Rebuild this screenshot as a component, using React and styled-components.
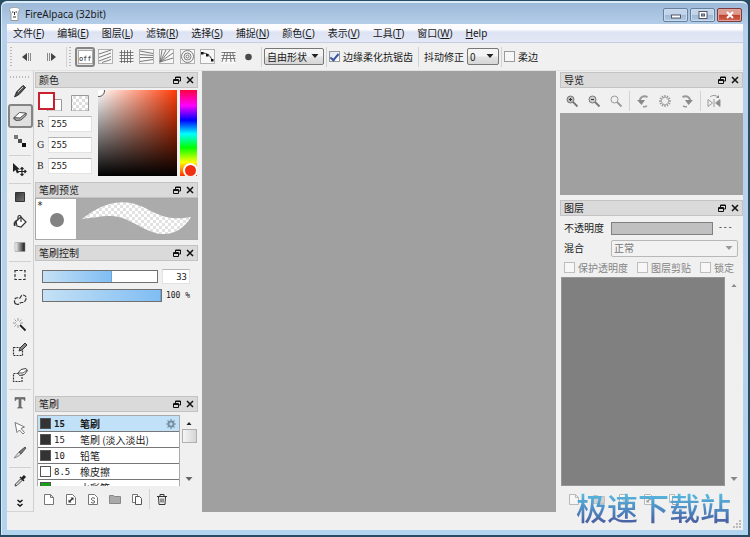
import React, { useState } from "react";
import styled, { createGlobalStyle, css } from "styled-components";

const ui = '"Noto Sans", "Noto Sans CJK SC", sans-serif';
const cjk = '"Noto Sans CJK SC", sans-serif';
const mono = '"DejaVu Sans Mono", "Noto Sans CJK SC", monospace';

const GlobalStyle = createGlobalStyle`
  * { box-sizing: border-box; }
  body { margin: 0; background: #284c62; color: #1a1a1a; font: 10px/14px ${cjk}; }
  button, input, select { font: inherit; color: inherit; margin: 0; }
  button { padding: 0; border: 0; background: none; }
  svg { display: block; flex: none; }
`;

/* ---------- window frame ---------- */

const Desktop = styled.div`
  min-height: 100vh;
  display: flex;
  padding: 1px 2px 2px 1px;
`;

const Window = styled.div`
  position: relative;
  flex: 1;
  display: flex;
  flex-direction: column;
  padding: 0 5px 5px 5px;
  border: 1px solid #dcebf8;
  border-width: 2px 0 0 1px;
  border-radius: 6px 6px 0 0;
  background: linear-gradient(#9db9d8, #b7d0eb 24px, #b9d1ea 300px, #b2d4ee);
`;

const TitleBar = styled.header`
  height: 21px;
  display: flex;
  align-items: center;
  gap: 5px;
  padding-left: 2px;
`;

const Title = styled.h1`
  flex: 1;
  margin: 0;
  font: 10px/14px ${ui};
`;

const WindowButtons = styled.div`
  display: flex;
  align-items: center;
  gap: 2px;
  padding: 3px 1px 0 0;
`;

const WindowButton = styled.button`
  width: 25px;
  height: 14px;
  display: flex;
  align-items: center;
  justify-content: center;
  border: 1px solid ${(p) => (p.$danger ? "#7c3a3c" : "#66809e")};
  border-radius: 2px;
  box-shadow: inset 0 0 0 1px ${(p) => (p.$danger ? "#e0a59c" : "#cbdcee")};
  background: ${(p) =>
    p.$danger
      ? "linear-gradient(#dd9a8f 45%, #c0402f 50%, #cf6650)"
      : "linear-gradient(#c3d5ea 45%, #9db8d6 50%, #b2cae4)"};
`;

const MenuBar = styled.nav`
  height: 19px;
  display: flex;
  align-items: center;
  gap: 13px;
  padding-left: 6px;
  border-bottom: 1px solid #c6cce0;
  background: linear-gradient(#fdfdff 30%, #dde3f3 45%, #e4e8f7);
`;

const MenuLink = styled.a`
  color: inherit;
  font: 10px/14px ${ui};
  text-decoration: none;
  white-space: nowrap;
`;

/* ---------- toolbar ---------- */

const ToolBar = styled.div`
  height: 28px;
  display: flex;
  align-items: center;
  padding-left: 3px;
  border-bottom: 1px solid #e2e2e2;
  background: #f0f0f0;
`;

const Grip = styled.i`
  flex: none;
  width: ${(p) => (p.$wide ? "20px" : "2px")};
  height: ${(p) => (p.$wide ? "2px" : "20px")};
  background: repeating-linear-gradient(
    ${(p) => (p.$wide ? "90deg" : "180deg")}, #b9b9b9 0 1px, transparent 1px 3px
  );
`;

const Rule = styled.i`
  flex: none;
  width: 1px;
  height: 20px;
  margin: 0 ${(p) => p.$gap || 2}px;
  background: #d2d2d2;
`;

const NavButtons = styled.div`
  display: flex;
  gap: 14px;
  padding: 0 7px 0 9px;
`;

const SnapGroup = styled.div`
  display: grid;
  grid-template-columns: repeat(9, 1fr);
  flex: none;
  width: 184px;
  margin-left: 4px;
`;

const SnapButton = styled.button`
  height: 20px;
  display: flex;
  align-items: center;
  justify-content: center;
  border-radius: 3px;
  ${(p) => p.$active && css`border: 2px solid #858585; background: #e6e6e6;`}
`;

const OffFace = styled.span`
  width: 15px;
  height: 14px;
  padding-top: 4px;
  background: #fff;
  border: 1px solid #aaa;
  font: 7px/9px ${mono};
  display: flex;
  justify-content: center;
`;

const SelectBox = styled.span`
  position: relative;
  flex: none;
  width: ${(p) => (p.$grow ? "auto" : p.$short ? "32px" : "60px")};
  ${(p) => p.$grow && css`flex: 1;`}
  color: ${(p) => (p.$muted ? "#777" : "#1a1a1a")};

  svg {
    position: absolute;
    right: 5px;
    top: 6px;
    pointer-events: none;
  }
`;

const Select = styled.select`
  appearance: none;
  display: block;
  width: 100%;
  height: 17px;
  padding: 0 2px;
  border: 1px solid ${(p) => (p.disabled ? "#b8b8b8" : "#777")};
  border-radius: 2px;
  background: ${(p) => (p.disabled ? "#f2f2f2" : "linear-gradient(#f4f4f4 48%, #e2e2e2 52%, #d6d6d6)")};
  font: 10px/14px ${cjk};
  opacity: 1;
`;

const CheckLabel = styled.label`
  display: flex;
  align-items: center;
  gap: 3px;
  color: ${(p) => (p.$muted ? "#858585" : "#1a1a1a")};
  white-space: nowrap;
`;

const CheckBox = styled.input`
  appearance: none;
  flex: none;
  width: 11px;
  height: 11px;
  border: 1px solid #9a9a9a;
  background: #f7f7f7;

  &:disabled { border-color: #bdbdbd; }
  &:checked {
    background: #eef3fb linear-gradient(135deg, #dbe4f4, #fff);
  }
  &:checked::after {
    content: "";
    display: block;
    width: 3px;
    height: 7px;
    margin: 0 auto;
    border: solid #3b55a0;
    border-width: 0 2px 2px 0;
    transform: rotate(40deg);
  }
`;

const FieldLabel = styled.label`
  margin-right: 3px;
  white-space: nowrap;
`;

/* ---------- body ---------- */

const Body = styled.main`
  flex: 1;
  display: grid;
  grid-template-columns: 27px 164px 1fr 184px;
  background: #f0f0f0;
`;

const ToolColumn = styled.aside`
  display: flex;
  flex-direction: column;
  align-items: center;
  gap: 1px;
  padding-top: 4px;
  border-right: 1px solid #cfcfcf;
  border-bottom: 1px solid #d4d4d4;
`;

const Tool = styled.button`
  width: 25px;
  height: ${(p) => (p.$compact ? "16px" : "24px")};
  display: flex;
  align-items: ${(p) => (p.$compact ? "flex-end" : "center")};
  justify-content: center;
  border: 1px solid transparent;
  border-radius: 3px;
  ${(p) => p.$active && css`border: 2px solid #848484; background: #e0e0e0;`}
`;

const ToolRule = styled.i`
  width: 22px;
  height: 1px;
  margin-top: 1px;
  background: #d0d0d0;
`;

const DockColumn = styled.aside`
  display: flex;
  flex-direction: column;
  padding: 1px 0 0 1px;
`;

const Dock = styled.section`
  display: flex;
  flex-direction: column;
  ${(p) => p.$fill && css`flex: 1;`}
`;

const DockHeader = styled.header`
  height: 16px;
  display: flex;
  align-items: center;
  gap: 5px;
  padding: 0 3px;
  border: 1px solid #c3c3c3;
  background: #dadada;
`;

const DockTitle = styled.h2`
  flex: 1;
  margin: 0;
  font: 10px/14px ${cjk};
`;

const Canvas = styled.div`
  margin: 0 3px 0 4px;
  background: #a0a0a0;
`;

const StatusBar = styled.footer`
  height: 18px;
  display: flex;
  align-items: flex-end;
  justify-content: flex-end;
  padding: 0 2px 2px 0;
  background: #f0f0f0;
`;

/* ---------- colour dock ---------- */

const ColorBody = styled.div`
  display: flex;
  gap: 3px;
  padding: 2px 1px 6px 2px;
`;

const ColorFields = styled.div`
  flex: 1;
  display: flex;
  flex-direction: column;
  gap: 5px;
`;

const Swatches = styled.div`
  height: 21px;
`;

const Channel = styled.label`
  display: flex;
  align-items: center;
  gap: 4px;
  font: 9px/14px "DejaVu Serif", serif;
`;

const ChannelKey = styled.span`
  width: 7px;
`;

const NumberField = styled.input`
  width: ${(p) => (p.$short ? "28px" : "44px")};
  height: ${(p) => (p.$short ? "15px" : "16px")};
  padding: 0 2px;
  border: 1px solid #e2e2e2;
  border-top-color: #b5b5b5;
  background: #fff;
  font: 9px/14px ${mono};
  text-align: ${(p) => (p.$short ? "right" : "left")};
`;

const ShadeField = styled.div`
  position: relative;
  width: 79px;
  height: 86px;
  overflow: hidden;
  background: linear-gradient(transparent, #000), linear-gradient(90deg, #fff, #ff3a05);

  &::before {
    content: "";
    position: absolute;
    left: -5px;
    top: -5px;
    width: 10px;
    height: 10px;
    border: 1px solid #555;
    border-radius: 50%;
    background: #fff;
  }
`;

const HueBar = styled.div`
  position: relative;
  width: 17px;
  height: 86px;
  overflow: hidden;
  background: linear-gradient(#ff0040, #ff00ff 18%, #0000ff 35%, #00ffff 51%, #00ff00 67%, #ffff00 84%, #ff3000);

  &::before {
    content: "";
    position: absolute;
    left: 3px;
    bottom: -2px;
    width: 11px;
    height: 11px;
    border: 2px solid #fff;
    border-radius: 50%;
    background: #f03010;
  }
`;

/* ---------- brush docks ---------- */

const Preview = styled.div`
  display: flex;
  height: 42px;
  margin-bottom: 5px;
  border: 1px solid #a8a8a8;
  background: #ababab;
`;

const TipCell = styled.div`
  width: 40px;
  padding-left: 1px;
  background: #fff;
  font: 10px/14px ${mono};
`;

const Tip = styled.i`
  display: block;
  width: 14px;
  height: 14px;
  margin: 0 auto;
  border-radius: 50%;
  background: #828282;
`;

const StrokeCell = styled.div`
  flex: 1;
  display: flex;
  justify-content: center;
  padding-top: 3px;
`;

const Controls = styled.div`
  flex: 1;
  display: flex;
  flex-direction: column;
  gap: 4px;
  padding: 8px 8px 0 7px;
`;

const ControlRow = styled.div`
  display: flex;
  align-items: center;
  justify-content: space-between;
  height: 15px;
  font: 8px/14px ${mono};
`;

const Slider = styled.input`
  appearance: none;
  width: ${(p) => (p.$long ? "120px" : "116px")};
  height: 13px;
  border: 1px solid #707070;
  background: linear-gradient(90deg, #c5e1f5, #7fbdf3) no-repeat #fff;
  background-size: ${(p) => p.$fill}% 100%;

  &::-webkit-slider-thumb { appearance: none; width: 1px; height: 11px; background: #6ba6d8; }
`;

const ListArea = styled.div`
  display: flex;
  gap: 1px;
  padding: 3px 1px 0 2px;
`;

const BrushList = styled.ul`
  width: 143px;
  height: 71px;
  margin: 0;
  padding: 0;
  overflow: hidden;
  list-style: none;
  border: 1px solid #aaa;
  border-bottom: 0;
  background: #fff;
`;

const BrushRow = styled.li`
  height: 16px;
  display: flex;
  align-items: center;
  padding: 0 3px 0 2px;
  border-bottom: 1px solid #777;
  font-weight: ${(p) => (p.$active ? 700 : 400)};
  background: ${(p) => (p.$active ? "#c0e1f8" : "#fff")};
`;

const BrushChip = styled.i`
  width: 11px;
  height: 11px;
  margin-right: 3px;
  border: 1px solid #555;
  background: ${(p) => p.$color};
`;

const BrushSize = styled.span`
  width: 26px;
  font-family: ${mono};
  font-size: 9px;
`;

const BrushName = styled.span`
  flex: 1;
  white-space: nowrap;
`;

const ScrollTrack = styled.div`
  width: ${(p) => (p.$wide ? "18px" : "16px")};
  display: flex;
  flex-direction: column;
  align-items: center;
  padding: 6px 0 5px;
  background: #f0f0f0;
`;

const ScrollThumb = styled.i`
  width: 15px;
  height: 14px;
  margin-top: 4px;
  border: 1px solid #b0b0b0;
  background: linear-gradient(90deg, #f5f5f5, #d5d5d5);
`;

const ScrollGap = styled.i`
  flex: 1;
`;

const IconRow = styled.div`
  height: 26px;
  display: flex;
  align-items: center;
  gap: ${(p) => p.$gap || 10}px;
  padding-left: 8px;
`;

const IconButton = styled.button`
  display: flex;
  opacity: ${(p) => (p.$faint ? 0.45 : 1)};
`;

/* ---------- right docks ---------- */

const Navigator = styled.div`
  height: 82px;
  margin-bottom: 5px;
  background: #a0a0a0;
`;

const NavTools = styled.div`
  height: 25px;
  display: flex;
  align-items: center;
  gap: 8px;
  padding-left: 5px;
`;

const LayerForm = styled.div`
  padding: 2px 5px 0 4px;
`;

const LayerRow = styled.div`
  display: flex;
  align-items: center;
  height: 20px;
  gap: 3px;
`;

const LayerLabel = styled.label`
  width: 44px;
`;

const OpacitySlider = styled.input`
  appearance: none;
  flex: 1;
  min-width: 0;
  height: 13px;
  border: 1px solid #808080;
  background: #c0c0c0;

  &::-webkit-slider-thumb { appearance: none; width: 1px; }
`;

const OpacityValue = styled.span`
  width: 22px;
  padding-left: 2px;
  font: 8px/14px ${mono};
`;

const CheckRow = styled.div`
  display: flex;
  align-items: center;
  gap: 9px;
  height: 19px;
`;

const LayerArea = styled.div`
  flex: 1;
  display: flex;
  padding-left: 1px;
`;

const LayerList = styled.div`
  flex: 1;
  border: 1px solid #969696;
  background: #808080;
`;

const Watermark = styled.div`
  position: absolute;
  right: 17px;
  bottom: 10px;
  font: 500 31px/36px ${cjk};
  color: transparent;
  background: linear-gradient(#56b8de 15%, #4e86c0 60%, #4a62a4 90%);
  background-clip: text;
  -webkit-background-clip: text;
`;

/* ---------- icons ---------- */

const Icon = ({ size = 16, w, h, children, ...rest }) => (
  <svg width={w || size} height={h || size} viewBox={`0 0 ${w || size} ${h || size}`} fill="none" stroke="#444" strokeWidth="1" aria-hidden="true" {...rest}>
    {children}
  </svg>
);

const Arrow = ({ up, color = "#222" }) => (
  <Icon w={8} h={4} stroke="none"><path fill={color} d={up ? "M1.5 4 4 1l2.5 3z" : "M.5 0h7L4 4z"} /></Icon>
);

const Float = () => (
  <Icon size={8} stroke="#111"><path d="M2.500 3V1h5v4H5.500M2.500 1.500h5" /><path d="M.5 3.500h5v4h-5zM.5 4.500h5" /></Icon>
);
const Close = () => (
  <Icon size={8} stroke="#111" strokeWidth="1.500"><path d="m1 1 6 6M7 1 1 7" /></Icon>
);

const snapArt = {
  parallel: <path d="M1 5 13 1M1 8.500 13 4M1 12 13 7.500M4 13.500l9-3" />,
  grid: <path d="M2.500 1v13M5.500 1v13M8.500 1v13M11.500 1v13M.5 3.500h14M.5 6.500h14M.5 9.500h14M.5 12.500h14" />,
  perspective: <path d="M1 2l13 2.500M1 5.500l13 1M1 8.500h13M1 12.500l13-2" />,
  radial: <path d="M1 13 3 1M1 13 7 1M1 13 11 1M1 13 14 4M1 13l13-4" />,
  circle: <><circle cx="7.500" cy="7.500" r="1.500" /><circle cx="7.500" cy="7.500" r="3.500" /><circle cx="7.500" cy="7.500" r="6" /></>,
  curve: <><path stroke="#222" d="M2 4c5 0 8 2 10 7" /><path fill="#111" stroke="none" d="M1 3h2.500v2.500H1zM6 5h2.500v2.500H6zM11 10h2.500v2.500H11z" /></>,
  floor: <path d="M.5 3.500h14M.5 6.500h14M.5 9.500h14M4 3 1 13M6.500 3 5 13M9 3l1 10M11.500 3 14 13" />,
};

const Snap = ({ kind }) =>
  kind === "dot" ? (
    <Icon size={15} stroke="none"><circle cx="7.500" cy="8" r="3.300" fill="#4a4a4a" /></Icon>
  ) : (
    <Icon size={15} stroke="#6c6c6c" strokeWidth=".9">
      <rect x=".5" y=".5" width="14" height="14" fill="#f7f7f7" stroke={kind === "grid" || kind === "floor" ? "none" : "#aaa"} />
      {snapArt[kind]}
    </Icon>
  );

const toolArt = {
  pencil: <><path fill="#555" stroke="#222" d="M3 13.500 4.500 9 11 2.500l2.500 2L7 11.500z" /><path stroke="#ccc" d="m6 9 5-5" /><path fill="#111" d="m2.500 14 2-1-1-1z" /></>,
  eraser: <><path fill="#fff" stroke="#555" d="M2 9.500 7.500 4.500l6 .5c1 0 1 1 .5 1.500L9 11.500 4 12c-2 0-3-1.500-2-2.500z" /><path fill="#aaa" stroke="#555" d="m2 9.500 6 .5 6-5v2.500L9 12l-5 .5z" /></>,
  dots: <g stroke="none"><path fill="#777" d="M2 2h4v4H2z" /><path fill="#4c4c4c" d="M6 6h4v4H6z" /><path fill="#111" d="M10 10h4v4h-4z" /></g>,
  move: <><path fill="#222" stroke="none" d="M1 2v9l2.500-2L5 12.500 7 11.500 5.500 8.500H8z" /><path stroke="#222" strokeWidth="1.200" d="M10 6.500v8M6 10.500h8M8.500 8 10 6.500 11.500 8M8.500 13l1.500 1.500 1.500-1.500M12.500 9l1.500 1.500-1.500 1.500" /></>,
  fill: <path fill="url(#dark)" stroke="#333" d="M3.500 3.500h9v9h-9z" />,
  bucket: <><path fill="#fff" stroke="#333" strokeWidth="1.200" d="m4 7 5-4 5 5-5 5-4-1z" /><path stroke="#333" strokeWidth="1.200" d="M9 8V3c0-2-3-2-3 0v2" /><path fill="#333" stroke="none" d="M2 12c-1-3 0-6 5-6-3 1-3.500 3-3.500 6z" /></>,
  gradient: <path fill="url(#side)" stroke="#999" strokeWidth=".6" d="M3 3.500h10v9H3z" />,
  select: <path stroke="#333" strokeWidth="1.200" strokeDasharray="3 1.500" d="M3 3.500h10v9H3z" />,
  lasso: <path stroke="#333" strokeWidth="1.200" strokeDasharray="4 1" d="M4 12c-2-1-2-5 0-6s3 1 4 0 1-3 3-3c4 0 4 5 1 7-2 1-3 0-4 1s-2 2-4 1z" />,
  wand: <><path stroke="#999" d="M6 1v3M6 8v3M1 6h3M8 6h3M2.500 2.500l2 2M9.500 2.500l-2 2M2.500 9.500l2-2" /><path stroke="#222" strokeWidth="1.800" d="m8 8 5.500 5.500" /></>,
  selectPen: <><path stroke="#333" strokeDasharray="2 1" strokeWidth="1.200" d="M1.500 5.500h9v8h-9z" /><path fill="#888" stroke="#333" d="m7 9 1-3 5-5 2 2-5 5z" /></>,
  selectEraser: <><path stroke="#333" strokeDasharray="2 1" strokeWidth="1.200" d="M1.500 6.500h8.500v8H1.500z" /><path fill="#fff" stroke="#444" d="M6 6 9 2.500l5-1 1.500 2-3 4-5 1z" /><path stroke="#555" d="m6 6 5 0 4-3" /></>,
  text: <path fill="#777" stroke="#555" strokeWidth=".6" d="M3 2.500h10v3h-.5L11.500 4H9v8l1.500 1h-5L7 12V4H4.500L3.500 5.500H3z" />,
  pointer: <path fill="#fff" stroke="#777" d="m3 2.500 2 10L7.500 10l3.500 4 1.500-1.500L9 8.500l3.500-1.500z" />,
  knife: <><path fill="#ddd" stroke="#888" d="m2 13 5-6 2 2c-2 2-4 3-7 4z" /><path fill="#777" stroke="#555" d="m7 7 6-5 1 1-5 6z" /></>,
  dropper: <><path fill="#ddd" stroke="#444" d="m3 13 .5-2 5-5L10 7.500l-5 5z" /><path stroke="#222" strokeWidth="3" d="m10 6 3-3" /><path stroke="#222" strokeWidth="1.500" d="m8 4 4 4" /></>,
  more: <path stroke="#111" strokeWidth="1.500" d="m5.500 7 2.500 2 2.500-2M5.500 11 8 13l2.500-2" />,
};

const fileArt = {
  page: <path fill="#fff" stroke="#777" d="M1.500 1.500h6l3 3v7h-9zM7.500 1.500v3h3" />,
  copyPage: <><path fill="#fff" stroke="#777" d="M1.500 1.500h6l3 3v7h-9z" /><path fill="#333" stroke="none" d="M5.500 4.500h3v3l-1-1-2 2 1 1h-3v-3l1 1 2-2z" /></>,
  script: <><path fill="#fff" stroke="#777" d="M1.500 1.500h6l3 3v7h-9z" /><path stroke="#555" d="M8 5.500C6 4 4 5 4.500 6.500S8 7 7.500 9 5 10 4 9" /></>,
  folder: <path fill="#aaa" stroke="#888" d="M.5 2.500h4l1 1h6v7H.5z" />,
  duplicate: <><path fill="#fff" stroke="#777" d="M1.500 1.500h5v8h-5z" /><path fill="#fff" stroke="#555" d="M4.500 3.500h4l2 2v6h-6z" /></>,
  trash: <path stroke="#333" d="M1 3.500h10M4 3V1.500h4V3M2.500 4l.5 7.500h6l.5-7.500M5 5.500v4M7 5.500v4" />,
};

const FileIcon = ({ kind }) => <Icon size={12}>{fileArt[kind]}</Icon>;

const navArt = {
  zoomIn: <><circle cx="5.500" cy="5.500" r="3.500" fill="#bbb" /><path d="M4 5.500h3M5.500 4v3" stroke="#333" /><path d="m8 8 4.500 4.500" strokeWidth="1.800" /></>,
  zoomOut: <><circle cx="5.500" cy="5.500" r="3.500" fill="#ccc" /><path d="M4 5.500h3" stroke="#333" /><path d="m8 8 4.500 4.500" strokeWidth="1.800" /></>,
  zoomFit: <><circle cx="5.500" cy="5.500" r="3.500" /><path d="m8 8 4.500 4.500" strokeWidth="1.800" /></>,
  rotateLeft: <><path strokeWidth="2" d="M11.500 3C7 1 3.500 3.500 4 7.500" /><path fill="#888" stroke="none" d="M1 6h8L5.500 11z" /><path strokeWidth="1.500" d="M7 12.500c2 .5 3 0 4-.5" /></>,
  spinner: <path strokeWidth="1.400" d="M7 1v3M7 10v3M1 7h3M10 7h3M4 1.800l1.500 2.600M10 1.800 8.500 4.400M1.800 4l2.600 1.500M12.200 4 9.600 5.500M1.800 10l2.600-1.500M12.200 10 9.600 8.500M4 12.200l1.500-2.600M10 12.200 8.500 9.600" />,
  rotateRight: <><path strokeWidth="2" d="M2.500 3C7 1 10.500 3.500 10 7.500" /><path fill="#888" stroke="none" d="M13 6H5l3.500 5z" /><path strokeWidth="1.500" d="M7 12.500c-2 .5-3 0-4-.5" /></>,
  flip: <><path d="M3 3c2-2 6-2 8 0M7 5v8" /><path d="M1 5.500 5.500 9 1 12.500z" /><path fill="#888" d="M13 5.500 8.500 9l4.500 3.500z" /><path fill="#888" d="M12 1v3H9z" stroke="none" /></>,
};

const NavIcon = ({ kind }) => (
  <Icon size={14} stroke={kind === "zoomIn" || kind === "zoomOut" ? "#777" : "#999"}>{navArt[kind]}</Icon>
);

const Logo = () => (
  <Icon w={11} h={14} stroke="#999">
    <path fill="#fff" d="M.5 3C0 1 3 .5 5.500.5S11 1 10.500 3L9 6v7.500H2V6z" />
    <path stroke="#333" d="M3 5h1.500M6.500 5H8M5.500 5v3M4 10h3" />
  </Icon>
);

const BrushStroke = () => (
  <Icon w={112} h={36} stroke="none">
    <defs>
      <pattern id="checker" width="6" height="6" patternUnits="userSpaceOnUse">
        <path fill="#fff" d="M0 0h6v6H0z" /><path fill="#e2e2e2" d="M0 0h3v3H0zM3 3h3v3H3z" />
      </pattern>
    </defs>
    <path fill="url(#checker)" d="M1 17C17 4 34-2 50 1c20 4 29 20 60 14-7 12-18 18-30 17C62 30 48 14 30 14c-12 0-18 2-29 3z" />
  </Icon>
);

const SwatchArt = () => (
  <Icon w={56} h={21} stroke="none">
    <defs>
      <pattern id="tiles" width="6" height="6" patternUnits="userSpaceOnUse">
        <path fill="#fff" d="M0 0h6v6H0z" /><path fill="#ddd" d="M0 0h3v3H0zM3 3h3v3H3z" />
      </pattern>
    </defs>
    <path fill="#fff" stroke="#999" d="M10.500 9.500h14V21h-14z" />
    <path fill="#fff" stroke="#c8202f" strokeWidth="2" d="M2 3h15v16H2z" />
    <path fill="url(#tiles)" stroke="#999" d="M34.500 5.500h17V21h-17z" />
  </Icon>
);

const Gear = () => (
  <Icon size={10} stroke="#7890a4">
    <circle cx="5" cy="5" r="2.500" strokeWidth="2" />
    <path d="M5 0v10M0 5h10M1.500 1.500l7 7M8.500 1.500l-7 7" strokeWidth="1.200" strokeDasharray="2 6 2" />
  </Icon>
);

/* ---------- data ---------- */

const menus = [["文件", "F"], ["编辑", "E"], ["图层", "L"], ["滤镜", "R"], ["选择", "S"], ["捕捉", "N"], ["颜色", "C"], ["表示", "V"], ["工具", "T"], ["窗口", "W"]];
const snaps = ["parallel", "grid", "perspective", "radial", "circle", "curve", "floor", "dot"];
const tools = ["pencil", "eraser", "dots", null, "move", null, "fill", "bucket", "gradient", null, "select", "lasso", "wand", "selectPen", "selectEraser", null, "text", "pointer", "knife", null, "dropper", "more"];
const brushes = [
  { size: "15", name: "笔刷", color: "#333" },
  { size: "15", name: "笔刷 (淡入淡出)", color: "#333" },
  { size: "10", name: "铅笔", color: "#333" },
  { size: "8.5", name: "橡皮擦", color: "#fff" },
  { size: "", name: "水彩笔", color: "#18a018" },
];

const DockPanel = ({ title, fill, children }) => (
  <Dock $fill={fill}>
    <DockHeader>
      <DockTitle>{title}</DockTitle>
      <IconButton aria-label={`${title} 浮动`}><Float /></IconButton>
      <IconButton aria-label={`${title} 关闭`}><Close /></IconButton>
    </DockHeader>
    {children}
  </Dock>
);

function ColorDock() {
  const [rgb, setRgb] = useState({ R: "255", G: "255", B: "255" });
  return (
    <DockPanel title="颜色">
      <ColorBody>
        <ColorFields>
          <Swatches><SwatchArt /></Swatches>
          {Object.keys(rgb).map((key) => (
            <Channel key={key}>
              <ChannelKey>{key}</ChannelKey>
              <NumberField value={rgb[key]} onChange={(e) => setRgb({ ...rgb, [key]: e.target.value })} />
            </Channel>
          ))}
        </ColorFields>
        <ShadeField />
        <HueBar />
      </ColorBody>
    </DockPanel>
  );
}

function BrushDocks() {
  const [active, setActive] = useState(0);
  return (
    <>
      <DockPanel title="笔刷预览">
        <Preview>
          <TipCell>*<Tip /></TipCell>
          <StrokeCell><BrushStroke /></StrokeCell>
        </Preview>
      </DockPanel>
      <DockPanel title="笔刷控制" fill>
        <Controls>
          <ControlRow>
            <Slider type="range" aria-label="笔刷大小" defaultValue="60" $fill={60} />
            <NumberField $short aria-label="大小" defaultValue="33" />
          </ControlRow>
          <ControlRow>
            <Slider type="range" aria-label="不透明度" defaultValue="100" $fill={100} $long />
            <span>100 %</span>
          </ControlRow>
        </Controls>
      </DockPanel>
      <DockPanel title="笔刷">
        <ListArea>
          <BrushList>
            {brushes.map((b, i) => (
              <BrushRow key={b.name} $active={i === active} onClick={() => setActive(i)}>
                <BrushChip $color={b.color} />
                <BrushSize>{b.size}</BrushSize>
                <BrushName>{b.name}</BrushName>
                {i === active && <IconButton aria-label="设置"><Gear /></IconButton>}
              </BrushRow>
            ))}
          </BrushList>
          <ScrollTrack><Arrow up /><ScrollThumb /><ScrollGap /><Arrow color="#666" /></ScrollTrack>
        </ListArea>
        <IconRow>
          {["page", "copyPage", "script", "folder", "duplicate"].map((k) => (
            <IconButton key={k} aria-label={k}><FileIcon kind={k} /></IconButton>
          ))}
          <Rule $gap={-4} />
          <IconButton aria-label="trash"><FileIcon kind="trash" /></IconButton>
        </IconRow>
      </DockPanel>
    </>
  );
}

function RightDocks() {
  return (
    <DockColumn>
      <DockPanel title="导览">
        <NavTools>
          {["zoomIn", "zoomOut", "zoomFit"].map((k) => <IconButton key={k} aria-label={k}><NavIcon kind={k} /></IconButton>)}
          <Rule $gap={-2} />
          {["rotateLeft", "spinner", "rotateRight"].map((k) => <IconButton key={k} aria-label={k}><NavIcon kind={k} /></IconButton>)}
          <Rule $gap={-2} />
          <IconButton aria-label="flip"><NavIcon kind="flip" /></IconButton>
        </NavTools>
        <Navigator />
      </DockPanel>
      <DockPanel title="图层" fill>
        <LayerForm>
          <LayerRow>
            <LayerLabel htmlFor="opacity">不透明度</LayerLabel>
            <OpacitySlider id="opacity" type="range" disabled />
            <OpacityValue>---</OpacityValue>
          </LayerRow>
          <LayerRow>
            <LayerLabel htmlFor="blend">混合</LayerLabel>
            <SelectBox $grow $muted>
              <Select id="blend" disabled><option>正常</option></Select>
              <Arrow color="#999" />
            </SelectBox>
          </LayerRow>
          <CheckRow>
            {["保护透明度", "图层剪贴", "锁定"].map((t) => (
              <CheckLabel key={t} $muted><CheckBox type="checkbox" disabled />{t}</CheckLabel>
            ))}
          </CheckRow>
        </LayerForm>
        <LayerArea>
          <LayerList />
          <ScrollTrack $wide><Arrow up color="#888" /><ScrollGap /><Arrow color="#888" /></ScrollTrack>
        </LayerArea>
        <IconRow $gap={13}>
          {["page", "folder", "script", "copyPage", "duplicate"].map((k) => (
            <IconButton key={k} $faint aria-label={k}><FileIcon kind={k} /></IconButton>
          ))}
        </IconRow>
      </DockPanel>
    </DockColumn>
  );
}

export default function App() {
  const [tool, setTool] = useState("eraser");
  return (
    <Desktop>
      <GlobalStyle />
      <Window>
        <TitleBar>
          <Logo />
          <Title>FireAlpaca (32bit)</Title>
          <WindowButtons>
            <WindowButton aria-label="最小化"><Icon w={10} h={8} stroke="#556"><rect x=".5" y="4" width="9" height="3" fill="#fff" /></Icon></WindowButton>
            <WindowButton aria-label="最大化"><Icon w={10} h={8} stroke="#556"><rect x="1" y=".5" width="8" height="7" fill="#fff" /><rect x="3.500" y="3" width="3" height="2" fill="#9db8d6" /></Icon></WindowButton>
            <WindowButton $danger aria-label="关闭"><Icon w={10} h={8} stroke="#fff" strokeWidth="2"><path d="m2 1 6 6M8 1 2 7" /></Icon></WindowButton>
          </WindowButtons>
        </TitleBar>
        <MenuBar>
          {menus.map(([name, key]) => <MenuLink href="#" key={key}>{name}(<u>{key}</u>)</MenuLink>)}
          <MenuLink href="#"><u>H</u>elp</MenuLink>
        </MenuBar>
        <ToolBar>
          <Grip />
          <NavButtons>
            <IconButton aria-label="undo"><Icon w={11} h={10} stroke="none"><path fill="#444" d="M6 1v8L1 5z" /><path fill="#888" d="M7 1h1v8H7zM9 1h1v8H9z" /></Icon></IconButton>
            <IconButton aria-label="redo"><Icon w={11} h={10} stroke="none"><path fill="#444" d="M5 1v8l5-4z" /><path fill="#888" d="M1 1h1v8H1zM3 1h1v8H3z" /></Icon></IconButton>
          </NavButtons>
          <Rule />
          <Grip />
          <SnapGroup>
            <SnapButton $active><OffFace>off</OffFace></SnapButton>
            {snaps.map((k) => <SnapButton key={k} aria-label={k}><Snap kind={k} /></SnapButton>)}
          </SnapGroup>
          <Rule />
          <SelectBox>
            <Select aria-label="形状" defaultValue="自由形状"><option>自由形状</option></Select>
            <Arrow />
          </SelectBox>
          <Rule />
          <CheckLabel><CheckBox type="checkbox" defaultChecked />边缘柔化抗锯齿</CheckLabel>
          <Rule $gap={5} />
          <FieldLabel htmlFor="jitter">抖动修正</FieldLabel>
          <SelectBox $short>
            <Select id="jitter"><option>0</option></Select>
            <Arrow />
          </SelectBox>
          <Rule />
          <CheckLabel><CheckBox type="checkbox" />柔边</CheckLabel>
        </ToolBar>
        <Body>
          <ToolColumn>
            <svg width="0" height="0" aria-hidden="true">
              <defs>
                <linearGradient id="dark" x2="1" y2="1"><stop stopColor="#333" /><stop offset="1" stopColor="#777" /></linearGradient>
                <linearGradient id="side"><stop stopColor="#fff" /><stop offset="1" stopColor="#111" /></linearGradient>
              </defs>
            </svg>
            <Grip $wide />
            {tools.map((t, i) =>
              t ? (
                <Tool key={t} aria-label={t} $compact={t === "more"} $active={t === tool} onClick={() => setTool(t)}>
                  <Icon>{toolArt[t]}</Icon>
                </Tool>
              ) : <ToolRule key={i} />
            )}
          </ToolColumn>
          <DockColumn>
            <ColorDock />
            <BrushDocks />
          </DockColumn>
          <Canvas />
          <RightDocks />
        </Body>
        <StatusBar>
          <Icon size={8} stroke="none"><path fill="#bbb" d="M6 0h2v2H6zM3 3h2v2H3zM6 3h2v2H6zM0 6h2v2H0zM3 6h2v2H3zM6 6h2v2H6z" /></Icon>
        </StatusBar>
        <Watermark>极速下载站</Watermark>
      </Window>
    </Desktop>
  );
}
